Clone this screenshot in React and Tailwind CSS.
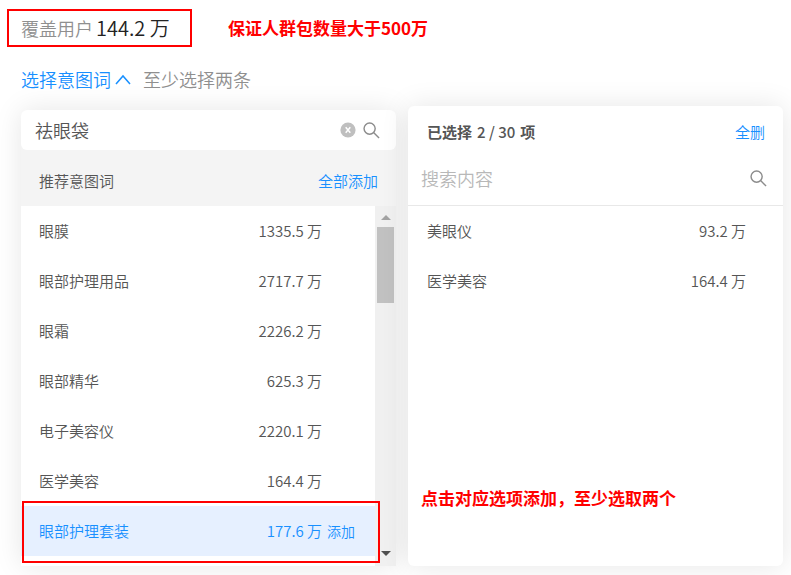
import React, { useState } from "react";

const SUGGESTED = [
  { name: "眼膜", count: "1335.5 万" },
  { name: "眼部护理用品", count: "2717.7 万" },
  { name: "眼霜", count: "2226.2 万" },
  { name: "眼部精华", count: "625.3 万" },
  { name: "电子美容仪", count: "2220.1 万" },
  { name: "医学美容", count: "164.4 万" },
  { name: "眼部护理套装", count: "177.6 万", active: true },
];

const SELECTED = [
  { name: "美眼仪", count: "93.2 万" },
  { name: "医学美容", count: "164.4 万" },
];

function SearchIcon() {
  return (
    <svg width="17" height="17" viewBox="0 0 18 18" fill="none" stroke="#8c8c8c" strokeWidth="1.5" aria-hidden="true">
      <circle cx="7" cy="7" r="5.9" />
      <path d="M11.2 11.2l5.8 5.8" />
    </svg>
  );
}

function ClearIcon() {
  return (
    <svg width="16" height="16" viewBox="0 0 16 16" aria-hidden="true">
      <circle cx="8" cy="8" r="7.6" fill="#bfbfbf" />
      <path d="M5.7 5.2l4.6 5.6M10.3 5.2l-4.6 5.6" stroke="#fff" strokeWidth="1.5" />
    </svg>
  );
}

function Scrollbar() {
  return (
    <div className="flex w-[21px] flex-col items-center bg-[#f0f0f0] pt-[9px] pb-[10px]" aria-hidden="true">
      <svg width="10" height="5" viewBox="0 0 10 5">
        <path d="M0 5L5 0l5 5z" fill="#a3a3a3" />
      </svg>
      <div className="mt-[7px] h-[76px] w-[17px] bg-[#c1c1c1]" />
      <svg className="mt-auto" width="10" height="5" viewBox="0 0 10 5">
        <path d="M0 0l5 5 5-5z" fill="#505050" />
      </svg>
    </div>
  );
}

function SuggestedPanel() {
  const [query, setQuery] = useState("祛眼袋");
  return (
    <section className="mt-1 flex flex-col rounded-md bg-[#f4f4f4] shadow-[0_0_28px_rgba(0,0,0,0.1)]">
      <div className="flex h-10 items-center rounded-md bg-white pr-4 pl-[14px]">
        <input
          aria-label="搜索意图词"
          className="min-w-0 flex-1 bg-transparent text-[18px] outline-none"
          value={query}
          onChange={(e) => setQuery(e.target.value)}
        />
        <button type="button" aria-label="清空" className="mr-[7px]" onClick={() => setQuery("")}>
          <ClearIcon />
        </button>
        <button type="button" aria-label="搜索">
          <SearchIcon />
        </button>
      </div>
      <div className="flex h-14 items-center justify-between pt-1.5 pr-[18px] pl-[18px]">
        <h2>推荐意图词</h2>
        <button type="button" className="text-[#1890ff]">全部添加</button>
      </div>
      <div className="flex">
        <ul className="relative min-w-0 flex-1 bg-white pb-[10px]">
          {SUGGESTED.map((item) => (
            <li
              key={item.name}
              className={
                item.active
                  ? "flex h-[50px] items-center bg-[#e6f0ff] pl-[18px] text-[#1890ff]"
                  : "flex h-[50px] items-center pl-[18px]"
              }
            >
              <span className="flex-1">{item.name}</span>
              <span>{item.count}</span>
              <span className="w-[53px] pl-[5px]">
                {item.active && (
                  <button type="button" className="text-[14px]">添加</button>
                )}
              </span>
            </li>
          ))}
          <li
            aria-hidden="true"
            className="pointer-events-none absolute -right-[5px] bottom-[3px] left-px z-10 h-[62px] border-2 border-[#f00]"
          />
        </ul>
        <Scrollbar />
      </div>
    </section>
  );
}

function SelectedPanel() {
  return (
    <section className="relative flex flex-col rounded-md bg-white shadow-[0_0_28px_rgba(0,0,0,0.1)]">
      <div className="flex h-[52px] items-center justify-between pr-[18px] pl-[19px]">
        <h2 className="flex gap-[5px] font-bold">
          已选择 <span className="font-medium">2 / 30</span> 项
        </h2>
        <button type="button" className="text-[#1890ff]">全删</button>
      </div>
      <div className="flex h-12 items-center border-b border-[#e8e8e8] pr-4 pb-1.5 pl-[13px]">
        <input
          aria-label="搜索已选内容"
          className="min-w-0 flex-1 bg-transparent text-[18px] outline-none placeholder:text-[#b8b8b8]"
          placeholder="搜索内容"
        />
        <button type="button" aria-label="搜索">
          <SearchIcon />
        </button>
      </div>
      <ul>
        {SELECTED.map((item) => (
          <li key={item.name} className="flex h-[50px] items-center justify-between pr-[37px] pl-[19px]">
            <span>{item.name}</span>
            <span>{item.count}</span>
          </li>
        ))}
      </ul>
      <p className="mt-auto pb-[54px] pl-[13px] text-[17px] leading-7 font-bold text-[#f00]">
        点击对应选项添加，至少选取两个
      </p>
    </section>
  );
}

export default function App() {
  return (
    <main className="overflow-hidden bg-white pr-2 pb-[9px] pl-[7px] pt-[9px] font-['Noto_Sans_CJK_SC',sans-serif] text-[15px] font-[350] text-[#555]">
      <header className="flex items-center gap-9">
        <p className="flex h-[38px] w-[185px] items-center gap-[3px] border-2 border-[#f00] pl-3 text-[18px] text-[#8f8f8f]">
          <span>覆盖用户</span>
          <strong className="text-[20px] font-[350] text-[#222]">144.2 万</strong>
        </p>
        <p className="text-[17px] font-bold text-[#f00]">保证人群包数量大于500万</p>
      </header>
      <div className="mt-[14px] flex h-9 items-center pl-[14px] text-[18px]">
        <button type="button" className="flex items-center gap-[3px] text-[#1890ff]">
          选择意图词
          <svg width="18" height="12" viewBox="0 0 18 12" fill="none" stroke="currentColor" strokeWidth="1.5" aria-hidden="true">
            <path d="M2 11l7-8 7 8" />
          </svg>
        </button>
        <span className="ml-[11px] text-[#8f8f8f]">至少选择两条</span>
      </div>
      <div className="mt-[9px] grid grid-cols-2 gap-3 pl-[14px]">
        <SuggestedPanel />
        <SelectedPanel />
      </div>
    </main>
  );
}
